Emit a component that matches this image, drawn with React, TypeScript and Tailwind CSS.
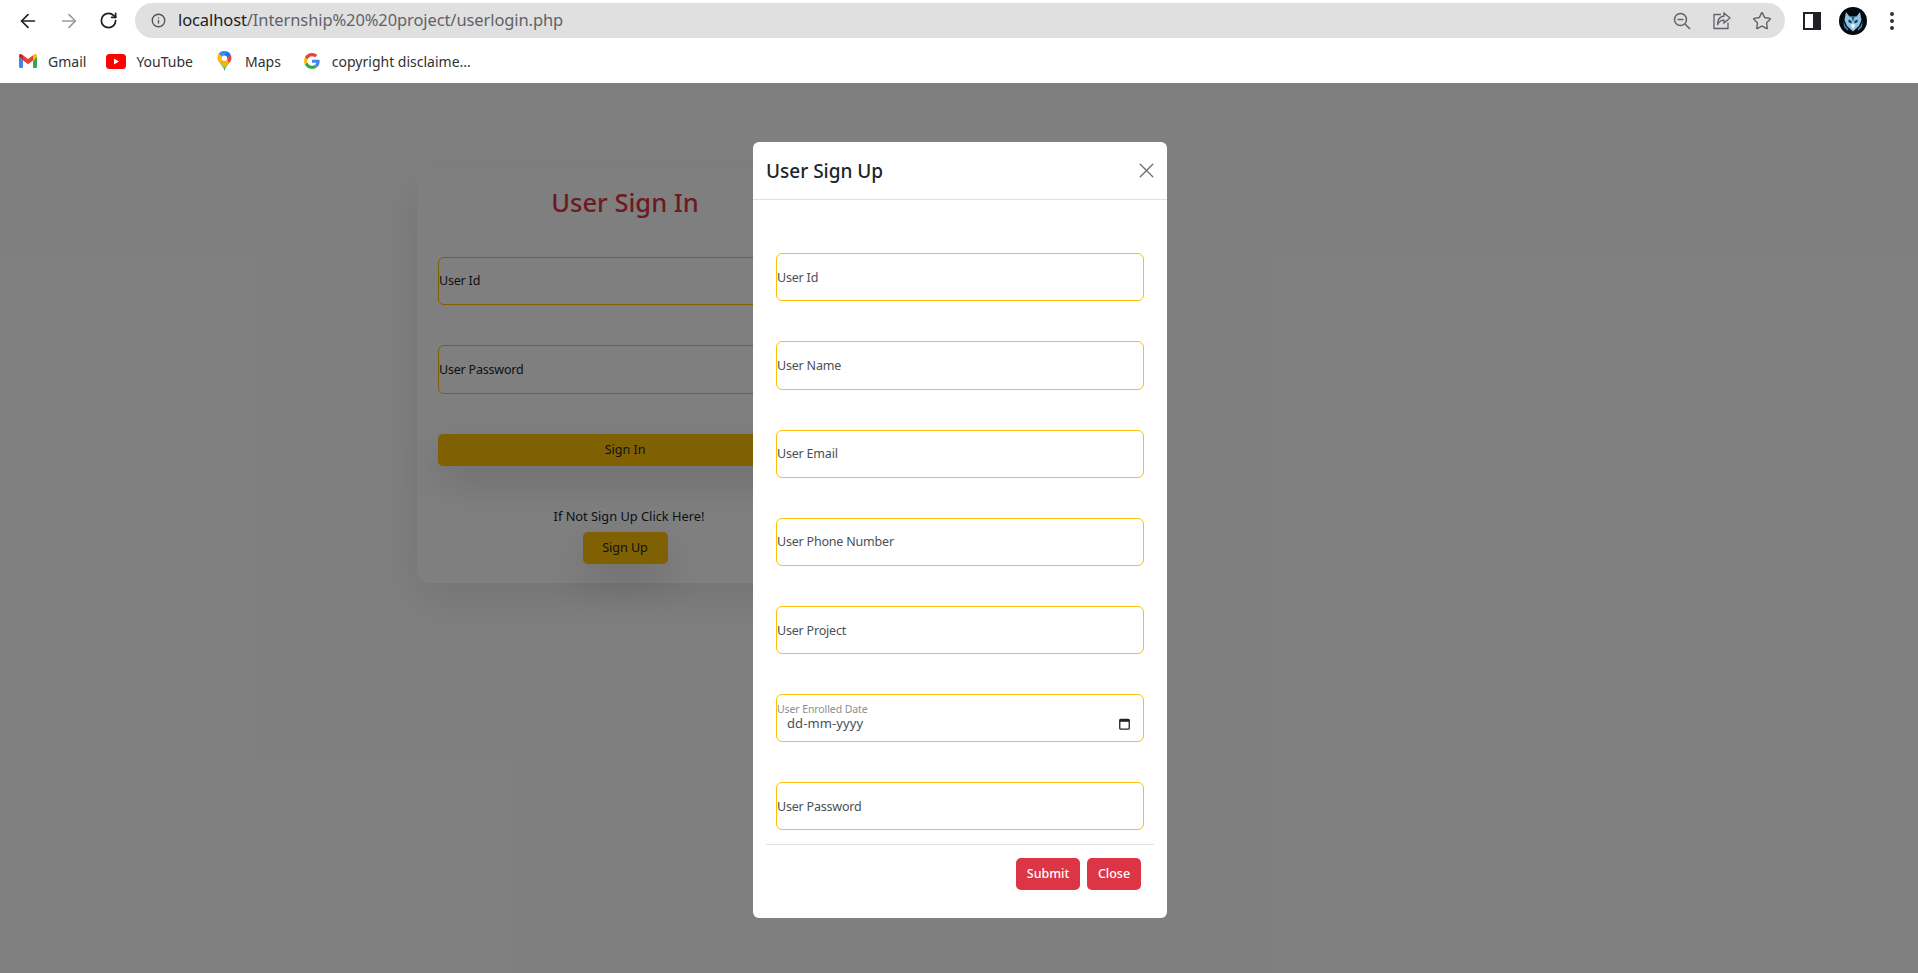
import { ArrowLeft, ArrowRight, RotateCw, Info, Star, X } from "lucide-react";

const signUpFields = ["User Id", "User Name", "User Email", "User Phone Number", "User Project"];

function GmailIcon() {
  return (
    <svg width="18" height="14" viewBox="0 0 18 14">
      <path d="M0 2.5V12.6C0 13.4.6 14 1.3 14H4V6.5L0 2.5Z" fill="#4285F4" />
      <path d="M14 14h2.7c.7 0 1.3-.6 1.3-1.300V2.500L14 6.500V14Z" fill="#34A853" />
      <path d="M14 1.200V6.500L18 2.500V1.800C18 .4 16.400-.4 15.300.5L14 1.200Z" fill="#FBBC04" />
      <path d="M4 6.500V1.200L9 5 14 1.200V6.500L9 10.200 4 6.500Z" fill="#EA4335" />
      <path d="M0 1.800V2.500L4 6.500V1.200L2.700.5C1.600-.4 0 .4 0 1.800Z" fill="#C5221F" />
    </svg>
  );
}

function YoutubeIcon() {
  return (
    <svg width="20" height="15" viewBox="0 0 20 15">
      <rect width="20" height="15" rx="3.500" fill="#FF0000" />
      <path d="M8 4.500v6l5-3-5-3Z" fill="#fff" />
    </svg>
  );
}

function MapsIcon() {
  return (
    <svg width="15" height="20" viewBox="0 0 15 20">
      <path d="M7.500 20C6.800 16.500 5 14.800 3 12.300L7.500 8l4.500 4.300c-2 2.500-3.800 4.200-4.500 7.700Z" fill="#34A853" />
      <path d="M1.700 2.600A7.400 7.400 0 0 0 3 12.300L8 6.500 1.700 2.600Z" fill="#FBBC04" />
      <path d="M1.700 2.600A7.400 7.400 0 0 1 9.500.3L5 5.500 1.700 2.600Z" fill="#4285F4" />
      <path d="M9.500.3a7.500 7.500 0 0 1 4.200 3.500L10 8 5 5.500 9.500.3Z" fill="#1A73E8" />
      <path d="M13.700 3.800A7.400 7.400 0 0 1 12 12.300L3 12.300l7-5 3.700-3.500Z" fill="#EA4335" />
      <path d="M3 12.300 10 7.300 12 12.300 7.500 17 3 12.300Z" fill="#FBBC04" opacity="0.900" />
      <circle cx="7.500" cy="7.300" r="2.700" fill="#fff" />
    </svg>
  );
}

function GoogleIcon() {
  return (
    <svg width="16" height="16" viewBox="0 0 48 48">
      <path fill="#EA4335" d="M24 9.500c3.500 0 6.700 1.200 9.200 3.600l6.900-6.900C35.900 2.400 30.500 0 24 0 14.600 0 6.500 5.400 2.600 13.200l8 6.200C12.400 13.700 17.700 9.500 24 9.500z" />
      <path fill="#4285F4" d="M46.900 24.500c0-1.600-.1-3.100-.4-4.500H24v9h12.900c-.6 3-2.200 5.500-4.700 7.200l7.700 6c4.500-4.200 7-10.300 7-17.700z" />
      <path fill="#FBBC05" d="M10.500 28.600c-.5-1.400-.8-3-.8-4.600s.3-3.200.8-4.600l-8-6.200C.9 16.500 0 20.100 0 24s.9 7.500 2.600 10.800l7.900-6.200z" />
      <path fill="#34A853" d="M24 48c6.500 0 11.900-2.100 15.900-5.800l-7.700-6c-2.200 1.400-4.900 2.300-8.200 2.300-6.300 0-11.600-4.200-13.500-9.900l-8 6.200C6.500 42.600 14.600 48 24 48z" />
    </svg>
  );
}

function Avatar() {
  return (
    <svg width="28" height="28" viewBox="0 0 28 28">
      <circle cx="14" cy="14" r="14" fill="#060a10" />
      <path d="M7 5l3.500 4.500h7L21 5l1.500 8-2.500 6-6 5.500L8 19l-2.500-6L7 5Z" fill="#8fc4e4" />
      <path d="M12 9.500h4l-2 5-2-5Z" fill="#2a5f8c" />
      <path d="M9.500 12.500l3 1.500v2.500l-3-1.500v-2.500Zm9 0-3 1.500v2.500l3-1.500v-2.500Z" fill="#12304a" />
      <path d="M11.500 18 14 16.500 16.500 18 14 22.500 11.500 18Z" fill="#e8f2f8" />
      <path d="M4.500 14l2 5 3 3.500-1 1-3.500-3.500-.5-6Zm19 0-2 5-3 3.500 1 1 3.500-3.500.5-6Z" fill="#3f86b8" />
    </svg>
  );
}

function Browser() {
  return (
    <div className="h-[83px] bg-white">
      <div className="flex h-[42px] items-start pt-[3px] pl-[7px]">
        <div className="flex h-[35px] w-[41px] items-center justify-center text-[#1f1f1f]"><ArrowLeft size={22} strokeWidth={1.8} /></div>
        <div className="flex h-[35px] w-[41px] items-center justify-center text-[#9a9a9a]"><ArrowRight size={22} strokeWidth={1.8} /></div>
        <div className="flex h-[35px] w-[39px] items-center justify-center text-[#1f1f1f]"><RotateCw size={19} strokeWidth={2.2} /></div>
        <div className="ml-[7px] flex h-[35px] w-[1650px] items-center rounded-full bg-[#e0e0e0] pl-[16px] pr-[13px]">
          <Info size={15} strokeWidth={2.2} className="text-[#555]" />
          <span className="ml-[12px] text-[16.500px] tracking-[-0.1px] text-[#5f6368]">
            <span className="text-[#202124]">localhost</span>/Internship%20%20project/userlogin.php
          </span>
          <div className="ml-auto flex items-center gap-[20px] text-[#5f6368]">
            <svg width="20" height="20" viewBox="0 0 20 20" fill="none" stroke="currentColor" strokeWidth="1.500">
              <circle cx="8.500" cy="8.500" r="6" />
              <path d="M5.500 8.500h6M13 13l5 5" />
            </svg>
            <svg width="20" height="20" viewBox="0 0 20 20" fill="none" stroke="currentColor" strokeWidth="1.300">
              <path d="M9 3.500H2v14h14v-6" />
              <path d="M12 2l6 5-6 5V9.200C9 9.200 7 10.500 5.500 14 5.500 9 8 5.500 12 5V2Z" />
            </svg>
            <Star size={20} strokeWidth={1.700} />
          </div>
        </div>
        <div className="ml-[18px] flex h-[35px] items-center">
          <div className="h-[18px] w-[18px] border-[2px] border-r-[8px] border-[#202124] bg-white" />
        </div>
        <div className="ml-[18px] flex h-[35px] items-center"><Avatar /></div>
        <div className="ml-[23px] flex h-[35px] flex-col items-center justify-center gap-[3px]">
          <i className="h-[4px] w-[4px] rounded-full bg-[#303134]" />
          <i className="h-[4px] w-[4px] rounded-full bg-[#303134]" />
          <i className="h-[4px] w-[4px] rounded-full bg-[#303134]" />
        </div>
      </div>
      <div className="flex h-[38px] items-center pl-[19px] text-[14px] text-[#303134]">
        <GmailIcon />
        <span className="ml-[11px] mr-[20px]">Gmail</span>
        <YoutubeIcon />
        <span className="ml-[10px] mr-[24px]">YouTube</span>
        <MapsIcon />
        <span className="ml-[13px] mr-[23px]">Maps</span>
        <GoogleIcon />
        <span className="ml-[12px]">copyright disclaime...</span>
      </div>
    </div>
  );
}

function SignInCard() {
  return (
    <div className="pl-[417px] pt-[84px]">
      <div className="flex h-[416px] w-[416px] flex-col rounded-[14px] bg-white px-[21px] shadow-[0_16px_48px_rgba(0,0,0,0.1)]">
        <h2 className="mt-[13px] text-center text-[25.500px] leading-[44px] font-medium text-[#dc3545]">User Sign In</h2>
        <div className="mt-[33px] flex h-[48px] items-center rounded-[6px] border border-[#ffc107] pt-[1px] text-[12.500px] tracking-[-0.2px] text-[#212529]">User Id</div>
        <div className="mt-[40px] flex h-[49px] items-center rounded-[6px] border border-[#ffc107] pt-[1px] text-[12.500px] tracking-[-0.2px] text-[#212529]">User Password</div>
        <div className="mt-[40px] flex h-[32px] items-center justify-center rounded-[5px] bg-[#ffc107] text-[12.500px] text-[#212529] shadow-[0_16px_40px_rgba(0,0,0,0.15)]">Sign In</div>
        <p className="mt-[41px] pl-[8px] text-center text-[12.800px] leading-[18px] text-[#212529]">If Not Sign Up Click Here!</p>
        <div className="mx-auto mt-[7px] flex h-[32px] w-[85px] items-center justify-center rounded-[5px] bg-[#ffc107] text-[12.500px] text-[#212529] shadow-[0_16px_40px_rgba(0,0,0,0.15)]">Sign Up</div>
      </div>
    </div>
  );
}

function SignUpModal() {
  return (
    <div className="absolute inset-x-0 top-[83px] bottom-0 flex justify-center bg-black/50 pl-[2px] pt-[59px]">
      <div className="h-[776px] w-[414px] rounded-[6px] bg-white">
        <div className="flex h-[58px] items-center justify-between border-b border-[#dee2e6] pl-[13px] pr-[8px]">
          <h5 className="pt-[2px] text-[19px] font-medium text-[#212529]">User Sign Up</h5>
          <X size={25} strokeWidth={1.300} className="mb-[1px] text-[#6f6f6f]" />
        </div>
        <div className="flex flex-col gap-[40px] px-[23px] pt-[53px]">
          {signUpFields.map((label, i) => (
            <div key={label} className={`flex h-[48.300px] items-center rounded-[6px] border border-[#ffc107] text-[12.500px] tracking-[-0.2px] text-[#495057] ${i === 0 ? "pt-[2px]" : "pt-[1.500px]"}`}>
              {label}
            </div>
          ))}
          <div className="flex h-[48px] flex-col justify-center rounded-[6px] border border-[#ffc107] pr-[13px]">
            <span className="text-[10.500px] leading-[11px] tracking-[-0.1px] text-[#8a8f94]">User Enrolled Date</span>
            <div className="flex items-center justify-between pl-[10px] text-[13px] leading-[17px] tracking-[0.1px] text-[#495057]">
              dd-mm-yyyy
              <svg width="11" height="12" viewBox="0 0 11 12" fill="none">
                <rect x="0.750" y="1.500" width="9.500" height="9.700" rx="1" stroke="#222" strokeWidth="1.300" />
                <rect x="0.750" y="1.200" width="9.500" height="2.600" fill="#222" />
              </svg>
            </div>
          </div>
          <div className="flex h-[48px] items-center rounded-[6px] border border-[#ffc107] pt-[1.500px] text-[12.500px] tracking-[-0.2px] text-[#495057]">User Password</div>
        </div>
        <div className="mx-[13px] mt-[14px] flex justify-end gap-[7px] border-t border-[#dee2e6] pt-[13px] pr-[13px]">
          <div className="flex h-[32px] w-[64px] items-center justify-center rounded-[5px] bg-[#dc3545] text-[12.500px] font-medium text-white">Submit</div>
          <div className="flex h-[32px] w-[54px] items-center justify-center rounded-[5px] bg-[#dc3545] text-[12.500px] font-medium text-white">Close</div>
        </div>
      </div>
    </div>
  );
}

export default function App() {
  return (
    <div className="relative h-[973px] overflow-hidden bg-white font-['Noto_Sans','Open_Sans',sans-serif]">
      <Browser />
      <SignInCard />
      <SignUpModal />
    </div>
  );
}
